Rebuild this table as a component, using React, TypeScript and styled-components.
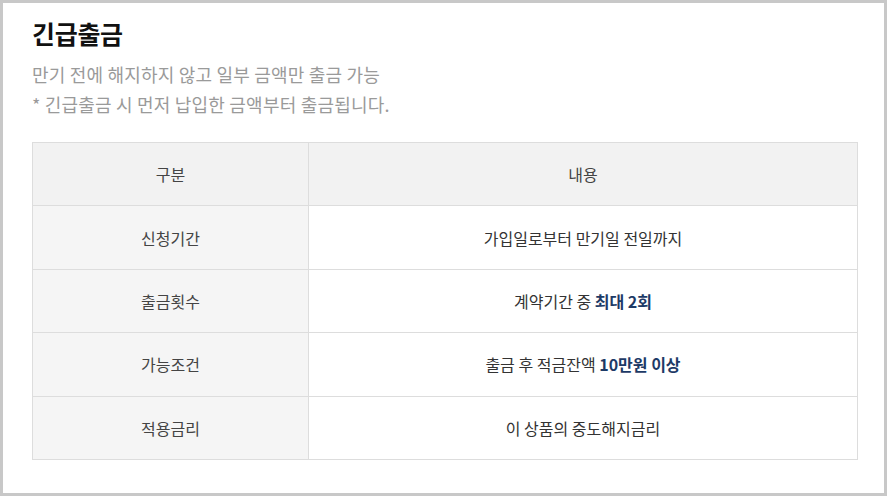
import styled, { createGlobalStyle } from "styled-components";

const GlobalStyle = createGlobalStyle`
  html, body {
    margin: 0;
    padding: 0;
    background: #ffffff;
  }
  body {
    font-family: "Noto Sans CJK KR", "Noto Sans", sans-serif;
  }
`;

const Frame = styled.div`
  width: 887px;
  height: 496px;
  box-sizing: border-box;
  border: 3px solid #c8c8c8;
  padding: 13px 27px 0 29px;
  background: #ffffff;
`;

const Title = styled.h2`
  margin: 0;
  font-size: 25px;
  font-weight: 700;
  line-height: 34px;
  color: #111111;
  letter-spacing: -0.3px;
`;

const Desc = styled.div`
  margin-top: 9px;
  font-size: 18px;
  line-height: 30px;
  color: #9a9a9a;
  letter-spacing: 0.2px;
`;

const Table = styled.table`
  margin-top: 23px;
  width: 826px;
  border-collapse: collapse;
  table-layout: fixed;
  font-size: 16px;
  color: #333333;
`;

const Cell = styled.td<{ $head?: boolean; $label?: boolean }>`
  height: 62.4px;
  padding: 0;
  text-align: center;
  border: 1px solid #dddddd;
  background: ${(p) => (p.$head ? "#f2f2f2" : p.$label ? "#f5f5f5" : "#ffffff")};
  color: ${(p) => (p.$head || p.$label ? "#444444" : "#333333")};
`;

const HeadCell = styled(Cell).attrs({ as: "th" })`
  font-weight: 400;
`;

const Strong = styled.b`
  color: #1d3a66;
  font-weight: 700;
`;

const rows: { label: string; body: React.ReactNode }[] = [
  { label: "신청기간", body: "가입일로부터 만기일 전일까지" },
  { label: "출금횟수", body: <>계약기간 중 <Strong>최대 2회</Strong></> },
  { label: "가능조건", body: <>출금 후 적금잔액 <Strong>10만원 이상</Strong></> },
  { label: "적용금리", body: "이 상품의 중도해지금리" },
];

export default function App() {
  return (
    <>
      <GlobalStyle />
      <Frame>
        <Title>긴급출금</Title>
        <Desc>
          만기 전에 해지하지 않고 일부 금액만 출금 가능
          <br />* 긴급출금 시 먼저 납입한 금액부터 출금됩니다.
        </Desc>
        <Table>
          <colgroup>
            <col style={{ width: 276 }} />
            <col />
          </colgroup>
          <thead>
            <tr>
              <HeadCell $head>구분</HeadCell>
              <HeadCell $head>내용</HeadCell>
            </tr>
          </thead>
          <tbody>
            {rows.map((r) => (
              <tr key={r.label}>
                <Cell $label>{r.label}</Cell>
                <Cell>{r.body}</Cell>
              </tr>
            ))}
          </tbody>
        </Table>
      </Frame>
    </>
  );
}
